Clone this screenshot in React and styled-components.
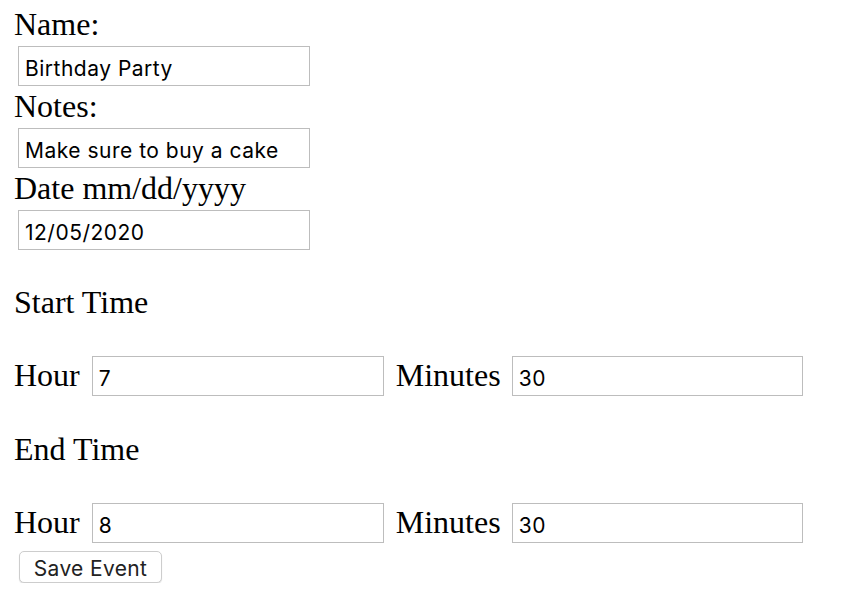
import React, { useState } from 'react';
import styled, { createGlobalStyle } from 'styled-components';

const GlobalStyle = createGlobalStyle`
  html, body {
    margin: 0;
    padding: 0;
    background: #fff;
  }
`;

const EventForm = () => {
  const [event, setEvent] = useState({
    name: 'Birthday Party',
    notes: 'Make sure to buy a cake',
    date: '12/05/2020',
    startHour: '7',
    startMinutes: '30',
    endHour: '8',
    endMinutes: '30',
  });

  const update = (key) => (e) => setEvent({ ...event, [key]: e.target.value });

  return (
    <Form onSubmit={(e) => e.preventDefault()}>
      <GlobalStyle />
      <Label>Name:</Label>
      <TextInput value={event.name} onChange={update('name')} />
      <Label>Notes:</Label>
      <TextInput value={event.notes} onChange={update('notes')} />
      <Label>Date mm/dd/yyyy</Label>
      <TextInput value={event.date} onChange={update('date')} />

      <SectionTitle>Start Time</SectionTitle>
      <TimeRow>
        <Label>Hour</Label>
        <TimeInput value={event.startHour} onChange={update('startHour')} />
        <Label $spaced>Minutes</Label>
        <TimeInput $narrow value={event.startMinutes} onChange={update('startMinutes')} />
      </TimeRow>

      <SectionTitle>End Time</SectionTitle>
      <TimeRow>
        <Label>Hour</Label>
        <TimeInput value={event.endHour} onChange={update('endHour')} />
        <Label $spaced>Minutes</Label>
        <TimeInput $narrow value={event.endMinutes} onChange={update('endMinutes')} />
      </TimeRow>

      <SaveButton type="submit">Save Event</SaveButton>
    </Form>
  );
};

const Form = styled.form`
  display: flex;
  flex-direction: column;
  align-items: flex-start;
  padding: 6px 0 0 14px;
  font-family: "Liberation Serif", "Times New Roman", serif;
  color: #000;
`;

const Label = styled.label`
  display: block;
  font-size: 32px;
  line-height: 36px;
  height: 36px;
  margin-left: ${(p) => (p.$spaced ? '12px' : '0')};
  white-space: nowrap;
`;

const TextInput = styled.input`
  box-sizing: border-box;
  width: 292px;
  height: 40px;
  margin: 4px 0 2px 4px;
  padding: 5px 6px 0;
  border: 1px solid #bdbdbd;
  border-radius: 0;
  outline: none;
  background: #fff;
  font-family: Inter, "Liberation Sans", sans-serif;
  font-size: 21px;
  letter-spacing: 0.5px;
  color: #000;
`;

const SectionTitle = styled.div`
  font-size: 32px;
  line-height: 36px;
  height: 36px;
  margin: 32px 0 36px;
`;

const TimeRow = styled.div`
  display: flex;
  align-items: center;
  height: 40px;
  margin-bottom: 3px;

  ${Label} {
    margin-bottom: 3px;
  }
`;

const TimeInput = styled(TextInput)`
  width: ${(p) => (p.$narrow ? '291px' : '292px')};
  margin: 0 0 0 ${(p) => (p.$narrow ? '11px' : '12px')};
`;

const SaveButton = styled.button`
  box-sizing: border-box;
  width: 143px;
  height: 32px;
  margin: 5px 0 0 5px;
  padding: 3px 0 0;
  background: #fff;
  border: 1px solid #cdcdcd;
  border-radius: 5px;
  box-shadow: 0 1px 1px rgba(0, 0, 0, 0.12);
  font-family: Inter, "Liberation Sans", sans-serif;
  font-size: 21px;
  letter-spacing: 0.35px;
  color: #222;
  cursor: pointer;
`;

export default EventForm;
